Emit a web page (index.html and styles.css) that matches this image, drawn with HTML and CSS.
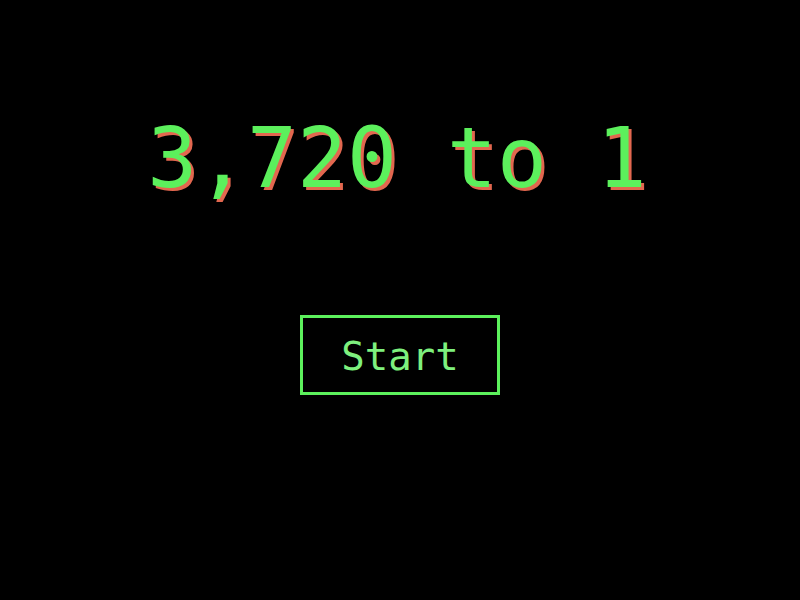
FILE: index.html
```html
<!DOCTYPE html>
<html lang="en">
<head>
  <meta charset="UTF-8" />
  <title>3,720 to 1</title>
  <link rel="stylesheet" href="styles.css">
</head>
<body>
  <div class="screen">
    <h1 class="odds">3,720 to 1</h1>
    <button class="start">Start</button>
  </div>
</body>
</html>
```

FILE: styles.css
```css
body {
  margin: 0;
  background-color: #000;
  font-family: "DejaVu Sans Mono", "Liberation Mono", monospace;
}
.screen {
  display: flex;
  flex-direction: column;
  align-items: center;
  height: 600px;
  padding-top: 117px;
  box-sizing: border-box;
}
.odds {
  margin: 0 6px 0 0;
  font-size: 83px;
  font-weight: normal;
  line-height: 1;
  color: #5cf05c;
  text-shadow: 3px 3px 0 #e2674f;
}
.start {
  margin-top: 115px;
  width: 200px;
  height: 80px;
  padding: 3px 0 0;
  background: #000;
  border: 3px solid #5cf05c;
  color: #7ef07e;
  font-family: inherit;
  font-size: 39px;
  cursor: pointer;
}
```
